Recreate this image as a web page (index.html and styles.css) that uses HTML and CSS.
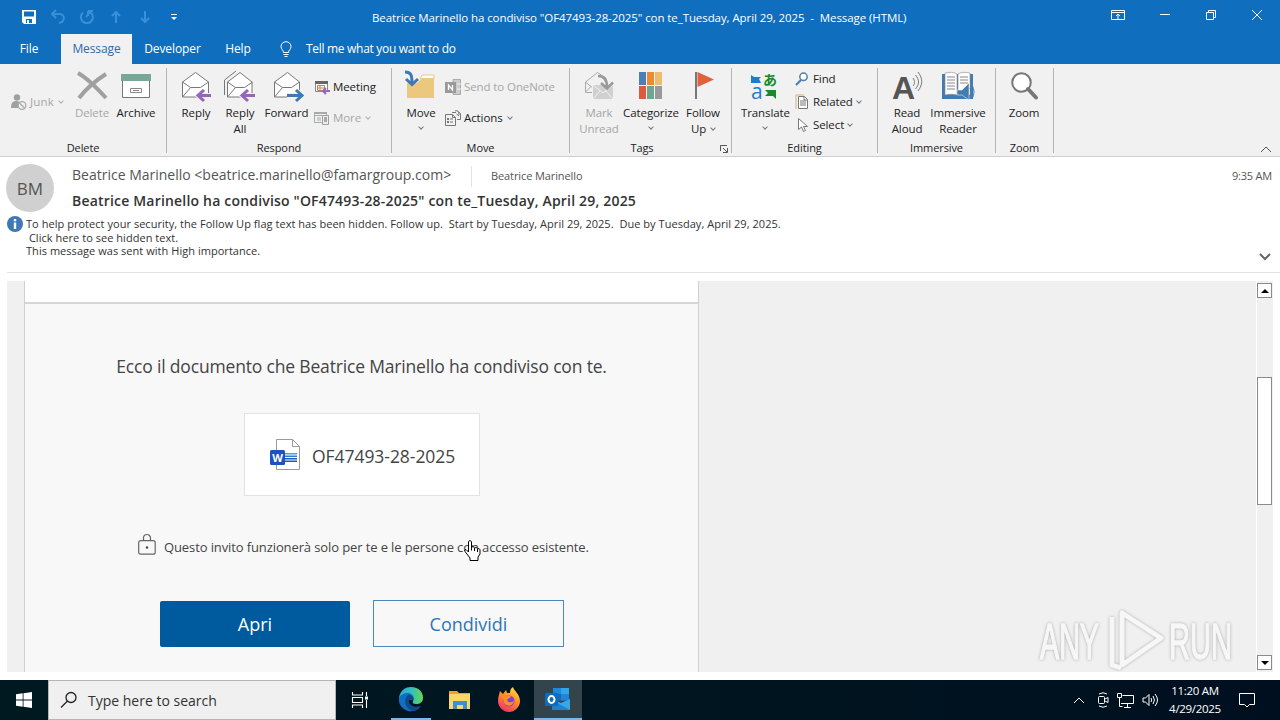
FILE: index.html
```
<!DOCTYPE html>
<html lang="en">
<head>
<meta charset="utf-8">
<title>Beatrice Marinello ha condiviso "OF47493-28-2025" - Message (HTML)</title>
<link rel="stylesheet" href="styles.css">
</head>
<body>

<header class="titlebar">
	<div class="quick">
		<svg width="16" height="16" viewBox="0 0 16 16"><path d="M1 1h14v14H3l-2-2z" fill="#fff"/><path d="M3 2.500h10v5H3zM5 10h6v4H5z" fill="#106ebe"/><path d="M6 11h2v3H6z" fill="#fff"/></svg>
		<svg class="dim" width="16" height="16" viewBox="0 0 16 16"><path d="M6 1L2 5l4 4M2 5h7c7 0 6 8 0 9" /></svg>
		<svg class="dim" width="16" height="16" viewBox="0 0 16 16"><path d="M4 3.500a6 6 0 1 0 7-.5M7 8l4-5M9 2h5M9 2v5"/></svg>
		<svg class="dim" width="16" height="16" viewBox="0 0 16 16"><path d="M8 14V3M4 7l4-4 4 4"/></svg>
		<svg class="dim" width="16" height="16" viewBox="0 0 16 16"><path d="M8 2v11M4 9l4 4 4-4"/></svg>
		<svg width="16" height="16" viewBox="0 0 16 16"><path d="M5 5h6v1H5zM5 8h6l-3 3z" fill="#fff"/></svg>
	</div>
	<div class="caption">Beatrice Marinello ha condiviso "OF47493-28-2025" con te_Tuesday, April 29, 2025&nbsp; - &nbsp;Message (HTML)</div>
	<div class="winbtns">
		<svg width="14" height="12" viewBox="0 0 14 12"><path d="M.5 1.500h13v9H.5zM.5 3.500h13M7 10V5M5 7l2-2 2 2"/></svg>
		<svg width="12" height="12" viewBox="0 0 12 12"><path d="M1 5.500h10"/></svg>
		<svg width="12" height="12" viewBox="0 0 12 12"><path d="M1.500 3.500h7v7h-7zM3.500 3V1.500h7v7H9"/></svg>
		<svg width="12" height="12" viewBox="0 0 12 12"><path d="M1 1l10 10M11 1L1 11"/></svg>
	</div>
</header>

<nav class="tabs">
	<a class="tab file">File</a>
	<a class="tab active">Message</a>
	<a class="tab dev">Developer</a>
	<a class="tab help">Help</a>
	<svg class="bulb" width="12" height="17" viewBox="0 0 12 17"><path d="M3.500 11.500C3.500 9 1 8.500 1 5.500a5 4.800 0 0 1 10 0c0 3-2.500 3.500-2.500 6zM3.500 13.500h5M4.500 15.500h3" fill="none" stroke="#fff"/></svg>
	<span class="tellme">Tell me what you want to do</span>
</nav>

<section class="ribbon">
	<div class="group g-delete">
		<div class="items">
			<div class="small off">
				<div><svg width="16" height="16" viewBox="0 0 16 16"><circle cx="6" cy="3.500" r="3.200" fill="#a0a0a0"/><path d="M0 14c0-6 2-7 6-7l3 1-2 6z" fill="#a0a0a0"/><circle cx="11" cy="11.500" r="3.800" fill="#f1f1f1" stroke="#aaa" stroke-width="1.300"/><path d="M8.500 9l5 5" stroke="#aaa" stroke-width="1.300"/></svg>Junk<i class="chev"></i></div>
			</div>
			<div class="big off"><svg width="32" height="32" viewBox="0 0 32 32"><path d="M2 3c9 5 18 14 28 25M30 4C19 11 10 19 3 28" fill="none" stroke="#a0a0a0" stroke-width="4"/></svg>Delete</div>
			<div class="big"><svg width="32" height="32" viewBox="0 0 32 32"><path d="M2.500 10h27v17.500h-27z" fill="#fff" stroke="#777"/><path d="M1 4h30v7H1z" fill="#76a797"/><path d="M10.500 18.500h11v4h-11zM13 20.500h6" fill="none" stroke="#888"/></svg>Archive</div>
		</div>
		<div class="gname">Delete</div>
	</div>
	<div class="group g-respond">
		<div class="items">
			<div class="big"><svg width="32" height="32" viewBox="0 0 32 32"><path d="M2.500 12l13-9.500 13 9.500v15h-26z" fill="#fff" stroke="#777"/><path d="M2.500 12l8 5.500h10l8-5.500M2.500 27l8-9.500" fill="none" stroke="#777"/><path d="M31 25.500H19M24 20l-6 5.500 6 5.500" fill="none" stroke="#f1f1f1" stroke-width="5"/><path d="M31 25.500H19M24 20l-6 5.500 6 5.500" fill="none" stroke="#9666b8" stroke-width="3"/></svg>Reply</div>
			<div class="big"><svg width="32" height="32" viewBox="0 0 32 32"><path d="M.5 25V10L12 1" fill="none" stroke="#777"/><path d="M3.500 12l12.500-9.500 12 9.500v15H3.500z" fill="#fff" stroke="#777"/><path d="M3.500 12l8 5.500h9l8-5.500M3.500 27l8-9.500" fill="none" stroke="#777"/><path d="M31 25.500H19M24 20l-6 5.500 6 5.500" fill="none" stroke="#f1f1f1" stroke-width="5"/><path d="M31 25.500H19M24 20l-6 5.500 6 5.500" fill="none" stroke="#9666b8" stroke-width="3"/></svg>Reply<br>All</div>
			<div class="big wide"><svg width="32" height="32" viewBox="0 0 32 32"><path d="M3.500 12l13-9.500 12 9.500v15h-25z" fill="#fff" stroke="#777"/><path d="M3.500 12l8 5.500h9l8-5.500M3.500 27l8-9.500" fill="none" stroke="#777"/><path d="M16 25.500h14M25 20l6 5.500-6 5.500" fill="none" stroke="#f1f1f1" stroke-width="5"/><path d="M16 25.500h14M25 20l6 5.500-6 5.500" fill="none" stroke="#3f78b5" stroke-width="3"/></svg>Forward</div>
			<div class="small">
				<div><svg width="16" height="16" viewBox="0 0 16 16"><path d="M1.500 3.500h12v9h-12z" fill="#fff" stroke="#888"/><path d="M1 2h13v3H1z" fill="#666"/><path d="M3.500 6.500h7v5h-7zM6 6.500v5M3.500 9h7" fill="none" stroke="#d08050"/><path d="M16 12H9M12 9l-3 3 3 3" fill="none" stroke="#9666b8" stroke-width="2"/></svg>Meeting</div>
				<div class="off"><svg width="16" height="16" viewBox="0 0 16 16"><path d="M.5 2.500h12v10H.5zM.5 5.500h12M3 8h4M3 10h4" fill="none" stroke="#aaa"/><path d="M0 2h13v2H0z" fill="#aaa"/><path d="M8.500 5.500h6v9h-6z" fill="#eee" stroke="#a0a0a0"/><path d="M10 7h3v5h-3z" fill="#aaa"/></svg>More<i class="chev"></i></div>
			</div>
		</div>
		<div class="gname">Respond</div>
	</div>
	<div class="group g-move">
		<div class="items">
			<div class="big"><svg width="32" height="32" viewBox="0 0 32 32"><path d="M17 5h12v4H15z" fill="#fff" stroke="#e6c98c"/><path d="M2 13h10l5-5h12v20H2z" fill="#ecc87e"/><path d="M0 2c6 0 7 3 7 11M1 9l6 5.500L13 9" fill="none" stroke="#3f78b5" stroke-width="3"/></svg>Move<i class="chev"></i></div>
			<div class="small">
				<div class="off"><svg width="16" height="16" viewBox="0 0 16 16"><path d="M8 .5h7.500v15H8z" fill="#ccc" stroke="#aaa"/><path d="M0 3h11v11H0z" fill="#999"/><path d="M3.500 11V6l4 5V6" fill="none" stroke="#fff" stroke-width="1.300"/><path d="M12 5h4M12 10h4" stroke="#eee"/></svg>Send to OneNote</div>
				<div><svg width="16" height="16" viewBox="0 0 16 16"><path d="M.5 4.500h7l3 3v8H.5zM7.500 4.500v3h3M7 2.500h4M12.500 1l3 2.500v6H12M10 1c3-1 4 1 4 4M11.500 4l2.500 2" fill="none" stroke="#777"/><path d="M2 8h2v2H2zM2 11h2v2H2zM5 8.500h3v1H5zM5 11.500h3v1H5z" fill="#777"/></svg>Actions<i class="chev"></i></div>
			</div>
		</div>
		<div class="gname">Move</div>
	</div>
	<div class="group g-tags">
		<div class="items">
			<div class="big off"><svg width="32" height="32" viewBox="0 0 32 32"><path d="M9 22.500H2.500V12l12-9.500 9 6" fill="none" stroke="#aaa"/><path d="M2.500 12l6 5M2.500 22l6-6" stroke="#aaa"/><path d="M10 15h20v14H10z" fill="#d0d0d0"/><path d="M10 15l10 8 10-8M10 29l7-8M30 29l-7-8" fill="none" stroke="#f1f1f1"/><path d="M15 6c6 0 9 3 9 11M18 13l6 5.500 6-6" fill="none" stroke="#999" stroke-width="2.600"/></svg>Mark<br>Unread</div>
			<div class="big cat"><svg width="32" height="32" viewBox="0 0 32 32"><path d="M4 2h7v13H4z" fill="#4a7fb8"/><path d="M12 2h7v13h-7z" fill="#ed8b35"/><path d="M20 2h7v13h-7z" fill="#ecbc70"/><path d="M4 16h7v13H4z" fill="#dd5b3c"/><path d="M12 16h7v13h-7z" fill="#72a591"/><path d="M20 16h7v13h-7z" fill="#999"/></svg>Categorize<i class="chev"></i></div>
			<div class="big"><svg width="32" height="32" viewBox="0 0 32 32"><path d="M8 2h2v27H8z" fill="#777"/><path d="M10.500 2L27 9.500 10.500 17z" fill="#e2603d"/></svg>Follow<br>Up<i class="chev"></i></div>
		</div>
		<div class="gname">Tags<svg class="launch" width="8" height="8" viewBox="0 0 8 8"><path d="M.5 6V.5H7M3 3l4 4M7.500 3v4.500H3" fill="none" stroke="#555"/></svg></div>
	</div>
	<div class="group g-edit">
		<div class="items">
			<div class="big"><svg width="32" height="32" viewBox="0 0 32 32"><path d="M2 5l3 2h7l-2 2 2 4H2z" fill="#1f7bd0"/><text x="2" y="29" class="tr-a">a</text><text x="14" y="15" class="tr-jp">あ</text><path d="M16 20h11v9l-3-3h-8l3-3z" fill="#178a2c"/></svg>Translate<i class="chev"></i></div>
			<div class="small three">
				<div><svg width="14" height="14" viewBox="0 0 14 14"><circle cx="8.500" cy="4.800" r="3.700" fill="#fff" stroke="#4d7fb0" stroke-width="1.500"/><path d="M6 8l-5 5" stroke="#4d7fb0" stroke-width="2.200"/></svg>Find</div>
				<div><svg width="14" height="16" viewBox="0 0 14 16"><path d="M1 15V1h8" fill="none" stroke="#dfae7c"/><path d="M3.500 2.500h6l3 3v9h-9z" fill="#fff" stroke="#777"/><path d="M5 7h6M5 9h6M5 11h6M9 3v3h3" fill="none" stroke="#777"/></svg>Related<i class="chev"></i></div>
				<div><svg width="14" height="16" viewBox="0 0 14 16"><path d="M3.500 1.500v11l3-2.500 2 4.500 2-1-2-4h4z" fill="#fff" stroke="#777"/></svg>Select<i class="chev"></i></div>
			</div>
		</div>
		<div class="gname">Editing</div>
	</div>
	<div class="group g-imm">
		<div class="items">
			<div class="big"><svg width="32" height="32" viewBox="0 0 32 32"><text x="1" y="29" class="bigA">A</text><path d="M22 8c2 3 2 6 0 8M24.500 5c4 5 4 9 0 14M27 2c5 7 5 12 0 19" fill="none" stroke="#777"/></svg>Read<br>Aloud</div>
			<div class="big reader"><svg width="32" height="32" viewBox="0 0 32 32"><path d="M0 4h31v25H0z" fill="#437cae"/><path d="M3 3c5-1 9-1 12 1v21c-3-1-7-1-12 0zM16 4c3-2 7-2 12-1v22c-5-1-9-1-12 0z" fill="#fff" stroke="#888" stroke-width=".6"/><path d="M5 7h8M5 10h8M5 13h8M5 16h8M5 19h8M18 7h8M18 10h8M18 13h8" stroke="#888"/><path d="M15 20h5l7-7v17l-7-5h-5z" fill="#437cae" stroke="#fff" stroke-width=".5"/><path d="M28 18q3 4 0 8M30 15q4 7 0 14" fill="none" stroke="#437cae"/></svg>Immersive<br>Reader</div>
		</div>
		<div class="gname">Immersive</div>
	</div>
	<div class="group g-zoom">
		<div class="items">
			<div class="big"><svg width="32" height="32" viewBox="0 0 32 32"><circle cx="13.500" cy="12.500" r="9.300" fill="#fff" stroke="#777" stroke-width="2"/><path d="M20 19l8 8.500" stroke="#777" stroke-width="4" stroke-linecap="round"/></svg>Zoom</div>
		</div>
		<div class="gname">Zoom</div>
	</div>
	<svg class="collapse" width="12" height="7" viewBox="0 0 12 7"><path d="M1 6l5-5 5 5" fill="none" stroke="#555"/></svg>
</section>

<section class="head">
	<div class="avatar">BM</div>
	<div class="who">
		<div class="from"><span class="addr">Beatrice Marinello &lt;beatrice.marinello@famargroup.com&gt;</span><span class="to">Beatrice Marinello</span></div>
		<div class="subject">Beatrice Marinello ha condiviso "OF47493-28-2025" con te_Tuesday, April 29, 2025</div>
	</div>
	<div class="time">9:35 AM</div>
</section>
<section class="info">
	<svg width="16" height="16" viewBox="0 0 16 16"><circle cx="8" cy="8" r="8" fill="#3f78b5"/><path d="M6.800 6.500h2.400V13H6.800zM6.800 3h2.400v2.200H6.800z" fill="#fff"/></svg>
	<div class="lines">
		<p class="l1">To help protect your security, the Follow Up flag text has been hidden. Follow up.&nbsp; Start by Tuesday, April 29, 2025.&nbsp; Due by Tuesday, April 29, 2025.</p>
		<p class="l2">&nbsp;Click here to see hidden text.</p>
		<p class="l3">This message was sent with High importance.</p>
	</div>
	<svg class="expand" width="12" height="8" viewBox="0 0 12 8"><path d="M1 1l5 5 5-5" fill="none" stroke="#666" stroke-width="2"/></svg>
</section>

<main class="body">
	<div class="mail">
		<div class="top"></div>
		<p class="lead">Ecco il documento che Beatrice Marinello ha condiviso con te.</p>
		<div class="doc">
			<svg width="32" height="34" viewBox="0 0 32 34"><path d="M6.500 1.500h16l7 7v23h-23z" fill="#fff" stroke="#999"/><path d="M22.500 1.500v7h7" fill="none" stroke="#999"/><path d="M15 15h12v1.500H15z" fill="#41a5ee"/><path d="M15 17.500h12V19H15z" fill="#2b7cd3"/><path d="M15 20h12v1.500H15zM15 22.500h12V24H15z" fill="#185abd"/><rect y="12" width="15" height="15" rx="1.500" fill="#1b52bd"/><text x="7.500" y="23.500" class="w">W</text></svg>
			<span>OF47493-28-2025</span>
		</div>
		<div class="lock">
			<svg width="18" height="21" viewBox="0 0 18 21"><rect x=".7" y="6.700" width="16.500" height="13.500" rx="2" fill="none" stroke="#666" stroke-width="1.200"/><path d="M5.500 6.500V4a3.500 3.500 0 0 1 7 0v2.500" fill="none" stroke="#666" stroke-width="1.200"/><circle cx="9" cy="13.500" r="1.200" fill="#444"/></svg>
			<span>Questo invito funzionerà solo per te e le persone con accesso esistente.</span>
			<svg class="hand" width="18" height="23" viewBox="0 0 18 23"><path d="M5.500 13V2.500q1.500-2 3 0V8q2-1 3 .8 2-.8 3 .8 2-.5 2.500 1.200V15l-2 3v3.500h-8V19l-5-6.500q-1-2 1-2z" fill="#fff" stroke="#000"/><path d="M8.500 8v3.500M11.500 9v3M14.500 10v3" stroke="#000"/></svg>
		</div>
		<div class="btns"><a class="open">Apri</a><a class="share">Condividi</a></div>
	</div>
	<div class="empty">
		<svg class="watermark" width="204" height="72" viewBox="0 -6 204 72"><text x="5" y="53" textLength="59" lengthAdjust="spacingAndGlyphs">ANY</text><text x="134" y="53" textLength="63" lengthAdjust="spacingAndGlyphs">RUN</text><path d="M87 7v52l39-27zM77 11v48l9 3" fill="none" stroke="#f7f7f7" stroke-width="5" stroke-linejoin="round"/></svg>
	</div>
	<div class="scroll">
		<div class="arrow"><i class="up"></i></div>
		<div class="thumb"></div>
		<div class="arrow"><i class="down"></i></div>
	</div>
</main>

<footer class="taskbar">
	<div class="start"><svg width="16" height="16" viewBox="0 0 16 16"><path d="M0 2.300L6.700 1.300V7.600H0zM7.500 1.200L16 0v7.600H7.500zM0 8.400h6.700v6.300L0 13.700zM7.500 8.400H16V16l-8.500-1.200z" fill="#fff"/></svg></div>
	<div class="search"><svg width="18" height="18" viewBox="0 0 18 18"><circle cx="11" cy="6.500" r="5" fill="none" stroke="#222" stroke-width="1.300"/><path d="M7.500 10L1 16.500" stroke="#222" stroke-width="1.300"/></svg><span>Type here to search</span></div>
	<div class="app view"><svg width="18" height="18" viewBox="0 0 18 18"><path d="M1.500 1v3h10V1M1.500 17v-3h10v3M1.500 6.500h10v5h-10zM15.500 1v4M15.500 9v8" fill="none" stroke="#fff" stroke-width="1.100"/><path d="M14 5.500h3v3h-3z" fill="#fff"/></svg></div>
	<div class="app run"><svg width="26" height="26" viewBox="0 0 26 26"><defs><linearGradient id="eg" x1="0" x2="1"><stop offset="0" stop-color="#2aa8dc"/><stop offset=".55" stop-color="#35c1b8"/><stop offset="1" stop-color="#67d84d"/></linearGradient></defs><path d="M1 12C2 4 8 1 13 1c8 0 12 5 12 11 0 4-3 6-7 6-3 0-4-1-3-3 2-3-1-7-5-7-4 0-8 2-9 7z" fill="url(#eg)"/><path d="M1 12c2-4 6-5 9-5 4 0 7 4 5 7-3-1-6 0-5 4 1 3 6 6 12 3-3 4-8 5-12 4C4 23 0 18 1 12z" fill="#0f6fc5"/><path d="M10 9c-4 3-5 12 4 16 4 0 7-2 9-5-6 2-11 0-12-4-.5-2 1-3 4-2 1-3-2-6-5-5z" fill="#114a8b"/></svg></div>
	<div class="app"><svg width="24" height="22" viewBox="0 0 24 22"><path d="M1 2h8l2 2h11v16H1z" fill="#e9a52c"/><path d="M1 5h21v15H1z" fill="#fcd667"/><path d="M5 12h14v8h-4v-4H9v4H5z" fill="#3c8fd4"/></svg></div>
	<div class="app"><svg width="26" height="26" viewBox="0 0 26 26"><defs><linearGradient id="fx" x1=".8" y1="0" x2=".3" y2="1"><stop offset="0" stop-color="#ffe43a"/><stop offset=".45" stop-color="#ff9026"/><stop offset="1" stop-color="#f4315d"/></linearGradient></defs><path d="M4 4l3 3 3-4 1 3h3c0-3 1-5 3-6 1 4 7 7 7 14 0 6-5 11-11 11S2 20 2 14C2 10 3 8 4 4z" fill="url(#fx)"/><circle cx="13" cy="14" r="5.500" fill="#8440d6"/><path d="M4 8c4-2 6-1 8 1h3c-1 3-3 2-4 4 1 3 4 3 7 1-1 5-6 6-9 3-2-2-1-5-2-6z" fill="#ff8c2b"/></svg></div>
	<div class="app run current"><svg width="26" height="24" viewBox="0 0 26 24"><path d="M8 1h16v13H8z" fill="#1668b8"/><path d="M8 1h8v6H8z" fill="#1f88d8"/><path d="M16 1h8v6h-8z" fill="#31a5ec"/><path d="M16 7h8v6h-8z" fill="#1e86d4"/><path d="M7 12l9 4 9-4v11H7z" fill="#38a7e8"/><path d="M7 23h18L7 13z" fill="#1d83ce"/><rect y="6" width="13" height="13" rx="1" fill="#0f6cbd"/><ellipse cx="6.500" cy="12.500" rx="3" ry="3.400" fill="none" stroke="#fff" stroke-width="2"/></svg></div>
	<div class="tray">
		<svg width="12" height="8" viewBox="0 0 12 8"><path d="M1 7l5-5 5 5"/></svg>
		<svg class="cam" width="12" height="16" viewBox="0 0 12 16"><rect x="1.500" y="4.500" width="6" height="7" rx="1"/><path d="M8 7l3-1.500v5L8 9M2 2q4-2.500 8 0M2 14q4 2.500 8 0"/></svg>
		<svg class="net" width="17" height="15" viewBox="0 0 17 15"><path d="M5.500 2.500h11v8H4M.5.500h4v4h-4zM2.500 5v8.500h3M10.500 11v3M7 14.500h7"/></svg>
		<svg width="17" height="14" viewBox="0 0 17 14"><path d="M1 5h2.500L7 1.500v11L3.500 9H1zM9 5q1.500 2 0 4M11 3q3 4 0 8M13 1q5 6 0 12"/></svg>
		<div class="clock">11:20 AM<br>4/29/2025</div>
		<svg width="17" height="17" viewBox="0 0 17 17"><path d="M.5 1.500h15v11h-5L8 15l-2.500-2.500h-5z"/></svg>
	</div>
</footer>

</body>
</html>
```
FILE: styles.css
```
* {
	box-sizing: border-box;
}
body {
	margin: 0;
	width: 1280px;
	height: 720px;
	overflow: hidden;
	background: #fff;
	color: #222;
	font: 12px/16px "Open Sans", "Noto Sans", "Noto Sans CJK JP", sans-serif;
	display: flex;
	flex-direction: column;
}
svg {
	display: block;
	flex: none;
	overflow: visible;
}
p {
	margin: 0;
}

/* title bar */
.titlebar {
	height: 34px;
	background: #106ebe;
	color: #fff;
	display: flex;
	flex: none;
}
.quick {
	display: flex;
	gap: 13px;
	padding: 9px 0 0 21px;
	width: 372px;
}
.dim {
	fill: none;
	stroke: #3a90d8;
	stroke-width: 2;
}
.caption {
	padding-top: 10px;
	font-size: 11.5px;
	width: 739px;
	white-space: nowrap;
	letter-spacing: -.08px;
}
.winbtns {
	display: flex;
	gap: 34px;
	padding-top: 9px;
	fill: none;
	stroke: #fff;
}

/* tabs */
.tabs {
	height: 30px;
	background: #106ebe;
	color: #fff;
	display: flex;
	flex: none;
	line-height: 30px;
}
.tab {
	text-align: center;
	letter-spacing: -.1px;
}
.file {
	width: 58px;
	margin-right: 3px;
}
.active {
	width: 71px;
	background: #f1f1f1;
	color: #2a6bb0;
}
.dev {
	width: 81px;
}
.help {
	width: 50px;
}
.bulb {
	margin: 7px 14px 0 17px;
}
.tellme {
	letter-spacing: -.3px;
}

/* ribbon */
.ribbon {
	height: 93px;
	background: #f1f1f1;
	border-bottom: 1px solid #d0d0d0;
	display: flex;
	flex: none;
	padding-top: 4px;
	font-size: 11.5px;
	letter-spacing: -.1px;
}
.group {
	height: 85px;
	border-right: 1px solid #b5b5b5;
	display: flex;
	flex-direction: column;
}
.items {
	display: flex;
	flex: none;
	height: 72px;
}
.gname {
	text-align: center;
	font-size: 11px;
	position: relative;
}
.launch {
	position: absolute;
	right: 3px;
	top: 5px;
}
.big {
	width: 44px;
	padding-top: 2px;
	text-align: center;
	white-space: nowrap;
}
.big svg {
	margin: 0 auto 3px;
}
.big > .chev {
	display: block;
	margin: 4px auto 0;
}
.g-tags .big br + .chev {
	display: inline-block;
	margin: 0 0 3px 5px;
}
.off {
	color: #a6a6a6;
}
.chev {
	display: inline-block;
	width: 4px;
	height: 4px;
	border: solid #777;
	border-width: 0 1px 1px 0;
	transform: rotate(45deg);
}
.off .chev {
	border-color: #b0b0b0;
}
.small {
	padding-top: 11px;
}
.small > div {
	display: flex;
	align-items: center;
	height: 16px;
	margin-bottom: 15px;
	gap: 3px;
	white-space: nowrap;
}
.small .chev {
	margin: -2px 0 0 2px;
}
.three {
	padding-top: 3px;
}
.three > div {
	margin-bottom: 7px;
	gap: 4px;
}
.three .chev {
	margin-left: 0;
}
.g-delete {
	width: 167px;
}
.g-delete .small {
	width: 70px;
	padding: 26px 0 0 11px;
	letter-spacing: .2px;
}
.g-respond {
	width: 225px;
}
.g-respond .items {
	padding-left: 7px;
}
.wide {
	width: 49px;
}
.g-respond .small {
	padding-left: 3px;
}
.g-move {
	width: 178px;
}
.g-move .items {
	padding-left: 7px;
}
.g-move .small {
	padding-left: 2px;
}
.g-tags {
	width: 162px;
}
.g-tags .items {
	padding-left: 6px;
}
.g-tags .gname {
	padding-right: 17px;
}
.g-tags .big {
	width: 46px;
}
.g-tags .cat {
	width: 58px;
}
.g-edit {
	width: 146px;
}
.g-edit .items {
	padding-left: 9px;
}
.g-edit .big {
	width: 48px;
	margin-right: 6px;
}
.g-imm {
	width: 118px;
}
.g-imm .items {
	padding-left: 9px;
}
.g-imm .big {
	width: 40px;
}
.g-imm .reader {
	width: 62px;
}
.g-zoom {
	width: 58px;
}
.g-zoom .items {
	padding-left: 6px;
}
.tr-a {
	font-size: 21px;
	fill: #1f7bd0;
}
.tr-jp {
	fill: #178a2c;
	font: bold 14px "Noto Sans CJK JP", sans-serif;
}
.bigA {
	font: bold 32px "Liberation Sans", sans-serif;
	fill: #555;
}
.collapse {
	margin: 78px 0 0 206px;
}

/* message header */
.head {
	height: 59px;
	display: flex;
	flex: none;
	color: #555;
}
.avatar {
	width: 48px;
	height: 48px;
	margin: 7px 18px 0 6px;
	border-radius: 50%;
	background: #d0d0d0;
	font-size: 17px;
	line-height: 49px;
	text-align: center;
}
.who {
	width: 1100px;
	white-space: nowrap;
}
.from {
	display: flex;
	align-items: center;
	padding-top: 8px;
	height: 30px;
}
.addr {
	width: 400px;
	height: 21px;
	font-size: 14px;
	line-height: 18px;
	border-right: 1px solid #e1e1e1;
}
.to {
	padding: 0 0 0 19px;
	font-size: 11px;
	letter-spacing: -.1px;
}
.subject {
	color: #333;
	font-size: 14px;
	font-weight: 600;
	line-height: 28px;
	letter-spacing: .19px;
}
.time {
	flex: 1;
	padding: 11px 8px 0 0;
	font-size: 11px;
	text-align: right;
	letter-spacing: -.2px;
}
.info {
	height: 57px;
	margin-left: 7px;
	display: flex;
	flex: none;
	border-bottom: 1px solid #e1e1e1;
	font-size: 11px;
	letter-spacing: .04px;
	color: #333;
}
.lines {
	width: 1234px;
	padding-left: 3px;
	line-height: 14px;
	white-space: nowrap;
}
.l1 {
	padding-top: 1px;
}
.l2 {
	line-height: 13px;
}
.expand {
	margin: 37px 0 0 2px;
}

/* reading pane */
.body {
	height: 391px;
	margin: 8px 7px 8px 7px;
	display: flex;
	flex: none;
	background: #f0f0f0;
}
.mail {
	width: 675px;
	margin-left: 17px;
	background: #f8f8f8;
	border: solid #d0d0d0;
	border-width: 0 1px;
	color: #444;
}
.top {
	height: 23px;
	background: #fff;
	border-bottom: 2px solid #d6d6d6;
}
.lead {
	padding-top: 49px;
	text-align: center;
	font-size: 17.500px;
	line-height: 26px;
	letter-spacing: -.17px;
}
.doc {
	width: 236px;
	height: 83px;
	margin: 34px 0 0 219px;
	background: #fff;
	border: 1px solid #e2e2e2;
	display: flex;
	align-items: center;
	padding-left: 25px;
	gap: 10px;
	font-size: 17.500px;
	letter-spacing: -.05px;
}
.doc span {
	padding-top: 2px;
}
.w {
	font: bold 11px "Open Sans", sans-serif;
	fill: #fff;
	text-anchor: middle;
}
.lock {
	position: relative;
	display: flex;
	align-items: center;
	margin: 38px 0 0 113px;
	gap: 8px;
	font-size: 13px;
	letter-spacing: -.11px;
	white-space: nowrap;
}
.lock span {
	padding-top: 5px;
}
.hand {
	position: absolute;
	left: 325px;
	top: 5px;
}
.btns {
	display: flex;
	margin: 45px 0 0 135px;
	gap: 23px;
	font-size: 18px;
	line-height: 46px;
	text-align: center;
}
.open {
	width: 190px;
	height: 46px;
	margin-top: 1px;
	border-radius: 2px;
	background: #005a9e;
	color: #fff;
}
.share {
	width: 191px;
	height: 47px;
	border: 1px solid #4f88c0;
	color: #2e75b6;
}
.empty {
	flex: 1;
	display: flex;
	align-items: flex-end;
	justify-content: flex-end;
	padding-right: 17px;
	border-right: 1px solid #fff;
}
.watermark {
	filter: drop-shadow(0 0 1.5px #aaa);
}
.watermark text {
	font: 50px "Liberation Sans", sans-serif;
	fill: #f7f7f7;
	stroke: #f7f7f7;
	stroke-width: 1.5px;
}
.scroll {
	width: 16px;
	padding-top: 2px;
	display: flex;
	flex-direction: column;
}
.arrow {
	width: 15px;
	height: 15px;
	background: #fff;
	border: 1px solid #8a8a8a;
	display: flex;
	align-items: center;
	justify-content: center;
}
.up, .down {
	border: 4px solid transparent;
	border-top: 0;
	border-bottom-color: #000;
}
.down {
	border: 4px solid transparent;
	border-bottom: 0;
	border-top-color: #000;
}
.thumb {
	width: 15px;
	height: 128px;
	margin: 79px 0 150px;
	background: #fff;
	border: 1px solid #8a8a8a;
}

/* taskbar */
.taskbar {
	height: 40px;
	display: flex;
	flex: none;
	background: linear-gradient(90deg, #001820, #00141f 60%, #000f20);
	color: #fff;
}
.start {
	width: 48px;
	padding: 12px 0 0 16px;
}
.search {
	width: 288px;
	display: flex;
	align-items: center;
	gap: 10px;
	padding-left: 11px;
	background: #f0f0f0;
	border: 1px solid #b5b5b5;
	color: #333;
	font-size: 14px;
}
.search span {
	padding-top: 2px;
}
.app {
	width: 49px;
	display: flex;
	align-items: center;
	justify-content: center;
}
.view {
	padding-right: 2px;
}
.run {
	border-bottom: 2px solid #76b9ed;
	margin: 0 4px 0 6px;
	width: 40px;
}
.current {
	width: 48px;
	margin: 0 0 0 1px;
	background: #34444d;
}
.tray {
	flex: 1;
	display: flex;
	align-items: center;
	justify-content: flex-end;
	gap: 8px;
	padding-right: 24px;
	fill: none;
	stroke: #fff;
}
.cam {
	margin-left: 4px;
}
.clock {
	width: 54px;
	font-size: 11.5px;
	line-height: 18px;
	text-align: center;
	letter-spacing: -.3px;
	white-space: nowrap;
	stroke: none;
	margin: 0 9px 0 1px;
}
```
